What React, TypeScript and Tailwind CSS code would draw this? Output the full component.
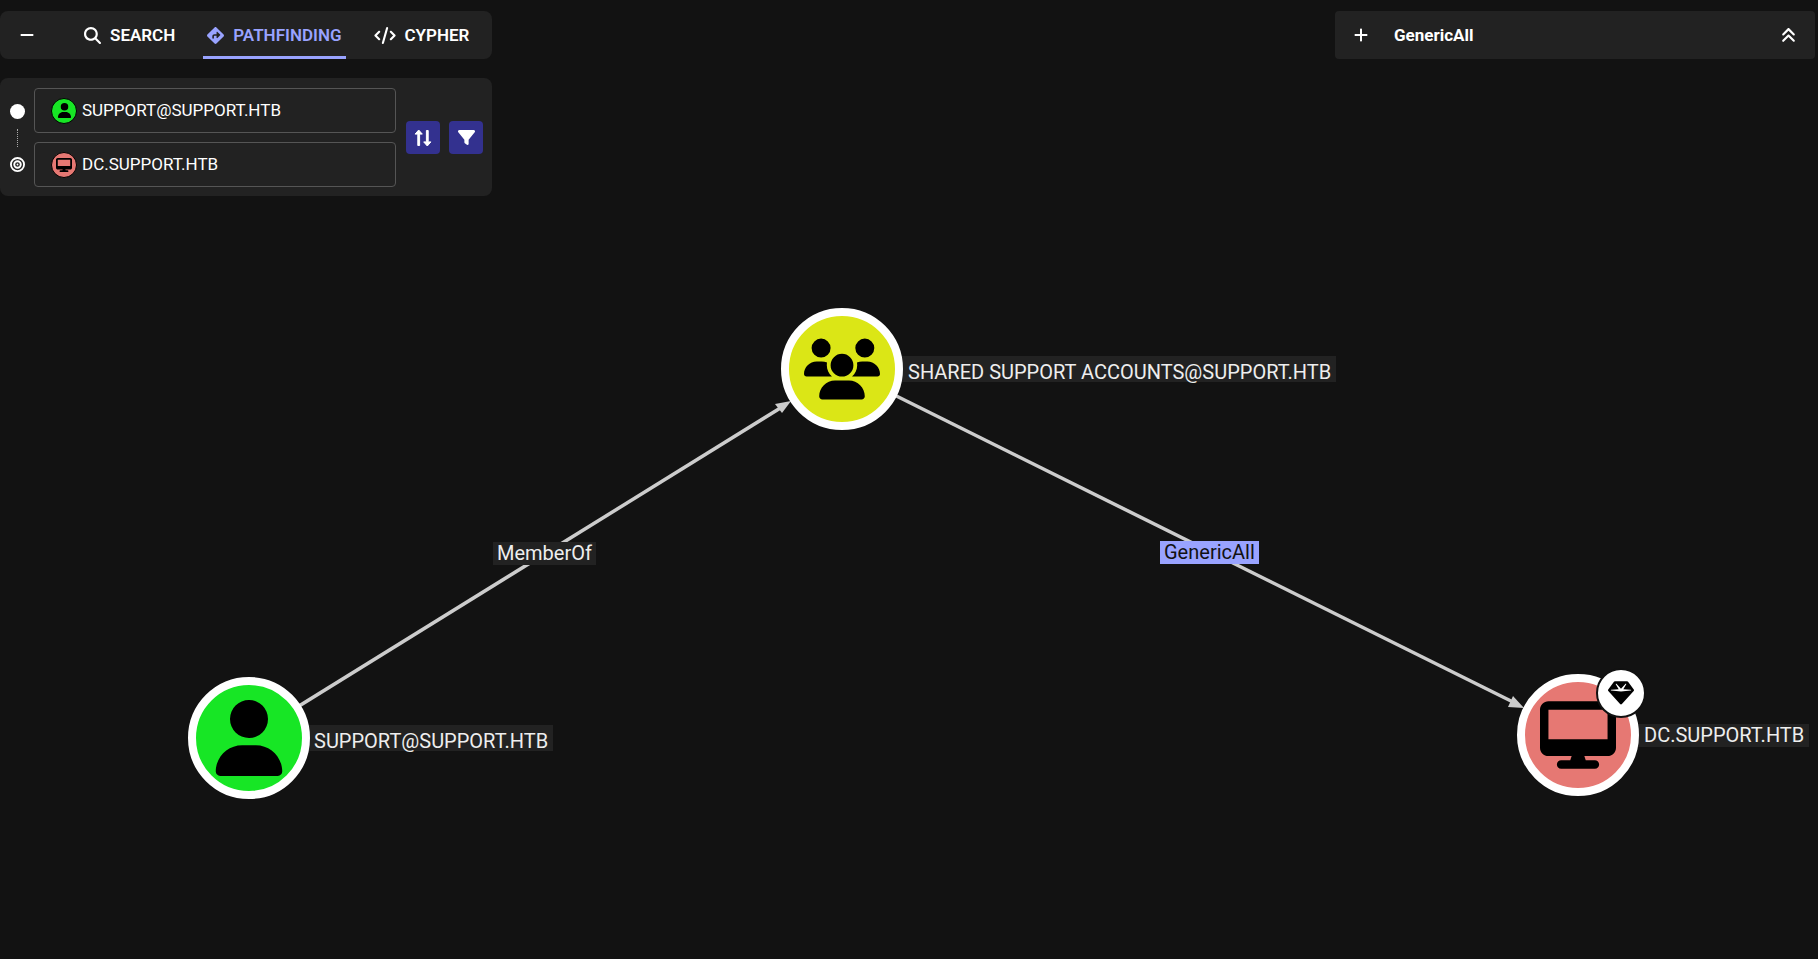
import { useState } from "react";
import type { ReactNode } from "react";
import {
  FaAnglesUp,
  FaBullseye,
  FaCircle,
  FaCode,
  FaDesktop,
  FaDiamondTurnRight,
  FaFilter,
  FaGem,
  FaMagnifyingGlass,
  FaMinus,
  FaPlus,
  FaUser,
  FaUsers,
} from "react-icons/fa6";

const tabs = [
  { name: "SEARCH", icon: <FaMagnifyingGlass className="size-[17px]" /> },
  { name: "PATHFINDING", icon: <FaDiamondTurnRight className="size-[17px]" /> },
  { name: "CYPHER", icon: <FaCode className="h-[17px] w-[22px]" /> },
];

const SwapIcon = () => (
  <svg
    viewBox="0 0 18 18"
    className="size-[18px]"
    fill="currentColor"
    stroke="currentColor"
    strokeLinejoin="round"
    aria-hidden="true"
  >
    <path d="M4.7 1 8.3 5.1H5.6v11.4H3.8V5.1H1.1z" />
    <path d="M13.3 17 9.7 12.9H12.4V1.5h1.8v11.4h2.7z" />
  </svg>
);

const TopTabs = () => {
  const [active, setActive] = useState("PATHFINDING");
  return (
    <div className="flex h-12 items-center rounded-lg bg-[#222222]">
      <button aria-label="Collapse" className="ml-5 mr-[46px] flex w-[14px] justify-center">
        <FaMinus className="size-4 shrink-0" />
      </button>
      <div role="tablist" className="flex h-full gap-6">
        {tabs.map((tab) => (
          <button
            key={tab.name}
            role="tab"
            aria-selected={tab.name === active}
            onClick={() => setActive(tab.name)}
            className={`flex items-center gap-[9px] border-y-3 border-t-transparent px-1 text-[17px] leading-6 font-semibold ${
              tab.name === active ? "border-b-[#99a3ff] text-[#99a3ff]" : "border-b-transparent"
            }`}
          >
            {tab.icon}
            {tab.name}
          </button>
        ))}
      </div>
    </div>
  );
};

const NodeField = ({ label, value, color, icon }: { label: string; value: string; color: string; icon: ReactNode }) => {
  const [text, setText] = useState(value);
  return (
    <label className="flex h-[45px] items-center gap-[5px] rounded border border-[#555555] pl-4">
      <span
        className={`flex size-[26px] shrink-0 items-center justify-center rounded-full border border-black text-black ${color}`}
      >
        {icon}
      </span>
      <input
        aria-label={label}
        value={text}
        onChange={(e) => setText(e.target.value)}
        className="w-full min-w-0 bg-transparent text-[17px] leading-[23px] outline-none"
      />
    </label>
  );
};

const PathPanel = () => (
  <div className="flex items-center rounded-lg bg-[#222222] pt-[10px] pr-[9px] pb-[9px] pl-[10px]">
    <div className="mr-[9px] flex flex-col items-center gap-[10px]">
      <FaCircle className="size-[15px]" />
      <span className="h-[18px] border-l border-dotted border-[#aaaaaa]" />
      <FaBullseye className="size-[15px]" />
    </div>
    <div className="flex grow flex-col gap-[9px]">
      <NodeField
        label="Start Node"
        value="SUPPORT@SUPPORT.HTB"
        color="bg-[#17e625]"
        icon={<FaUser className="size-[15px]" />}
      />
      <NodeField
        label="Destination Node"
        value="DC.SUPPORT.HTB"
        color="bg-[#e67873]"
        icon={<FaDesktop className="size-4" />}
      />
    </div>
    <button aria-label="Swap" className="ml-[10px] flex h-[33px] w-[34px] items-center justify-center rounded bg-[#33318f]">
      <SwapIcon />
    </button>
    <button aria-label="Filter" className="ml-[9px] flex h-[33px] w-[34px] items-center justify-center rounded bg-[#33318f]">
      <FaFilter className="size-[17px]" />
    </button>
  </div>
);

const EdgePanel = () => (
  <aside className="flex h-12 w-[480px] items-center rounded bg-[#222222] px-[18px]">
    <button aria-label="Expand">
      <FaPlus className="size-4" />
    </button>
    <h2 className="ml-[25px] grow text-[17px] leading-6 font-bold">GenericAll</h2>
    <button aria-label="Collapse all">
      <FaAnglesUp className="size-[17px]" />
    </button>
  </aside>
);

const Disc = ({ place, color, children }: { place: string; color: string; children: ReactNode }) => (
  <div
    className={`absolute flex size-[122px] items-center justify-center rounded-full border-8 border-white text-black ${place} ${color}`}
  >
    {children}
  </div>
);

const Graph = () => (
  <div className="absolute inset-0 overflow-hidden text-xl leading-[23px] whitespace-nowrap text-[#eeeeee]">
    <svg className="absolute inset-0 size-full" stroke="#cccccc" strokeWidth="3.5" fill="#cccccc" aria-hidden="true">
      <line x1="249" y1="737" x2="782" y2="407" />
      <line x1="842" y1="369" x2="1513" y2="702" />
      <path stroke="none" d="M791 401 782 413 775 404z" />
      <path stroke="none" d="M1524 708 1508 707 1513 696z" />
    </svg>
    <span className="absolute top-[542px] left-[493px] bg-[#222222] px-1">MemberOf</span>
    <span className="absolute top-[541px] left-[1160px] bg-[#99a3ff] px-1 text-[#111111]">GenericAll</span>

    <span className="absolute top-[356px] left-[900px] bg-[#222222] pt-[6px] pr-[5px] pl-2 leading-5">
      SHARED SUPPORT ACCOUNTS@SUPPORT.HTB
    </span>
    <span className="absolute top-[725px] left-[306px] bg-[#222222] pt-[6px] pr-[5px] pl-2 leading-5">
      SUPPORT@SUPPORT.HTB
    </span>
    <span className="absolute top-[724px] left-[1636px] bg-[#222222] pr-[5px] pl-2">DC.SUPPORT.HTB</span>

    <Disc place="top-[308px] left-[781px]" color="bg-[#dbe616]">
      <FaUsers className="size-[76px] shrink-0" />
    </Disc>
    <Disc place="top-[677px] left-[188px]" color="bg-[#17e625]">
      <FaUser className="size-[76px] shrink-0" />
    </Disc>
    <Disc place="top-[674px] left-[1517px]" color="bg-[#e67873]">
      <FaDesktop className="size-[76px] shrink-0" />
    </Disc>
    <span className="absolute top-[668px] left-[1596px] flex size-[50px] items-center justify-center rounded-full border-2 border-[#111111] bg-white text-black">
      <FaGem className="size-[26px]" />
    </span>
  </div>
);

const App = () => {
  return (
    <main className="relative min-h-screen bg-[#121212] font-['Roboto',sans-serif] text-white">
      <Graph />
      <div className="relative flex items-start justify-between pt-[11px] pr-[3px]">
        <div className="flex w-[492px] flex-col gap-[19px]">
          <TopTabs />
          <PathPanel />
        </div>
        <EdgePanel />
      </div>
    </main>
  );
};

export default App;
